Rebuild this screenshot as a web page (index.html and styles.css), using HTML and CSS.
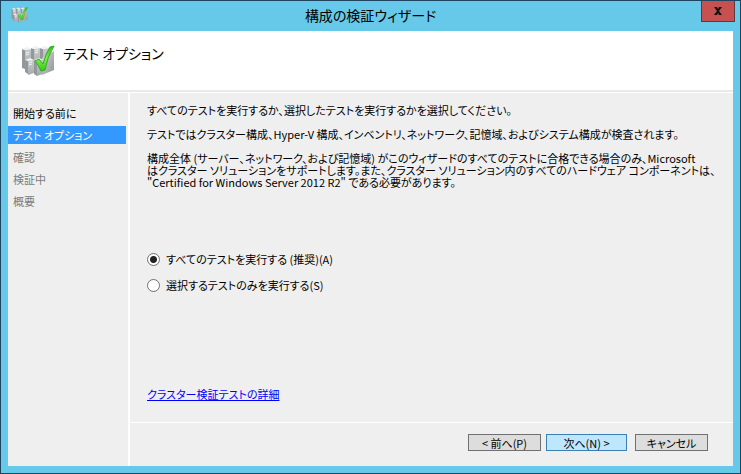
FILE: index.html
```html
<!DOCTYPE html>
<html lang="ja">
<head>
    <meta charset="UTF-8">
    <meta name="viewport" content="width=device-width, initial-scale=1.0">
    <title>構成の検証ウィザード</title>
    <link rel="stylesheet" href="styles.css">
</head>
<body>
    <!-- Shared cluster icon -->
    <svg class="symbols" aria-hidden="true">
        <defs>
            <linearGradient id="steel" x1="0" y1="0" x2="0" y2="1">
                <stop offset="0" stop-color="#c9cccf"/>
                <stop offset="1" stop-color="#a3a7aa"/>
            </linearGradient>
            <linearGradient id="shade" x1="0" y1="0" x2="1" y2="1">
                <stop offset="0" stop-color="#d8dadc"/>
                <stop offset="1" stop-color="#8e9295"/>
            </linearGradient>
            <linearGradient id="leaf" x1="0" y1="0" x2="0" y2="1">
                <stop offset="0" stop-color="#36b81f"/>
                <stop offset="0.5" stop-color="#7df04a"/>
                <stop offset="1" stop-color="#35c51a"/>
            </linearGradient>
        </defs>
        <symbol id="cluster" viewBox="0 0 34 32">
            <!-- Back row -->
            <path d="M1 4l3 1v19l-3-1z M10 3l3 1v12l-3-1z M19 3l3 1v12l-3-1z" fill="#94989b"/>
            <path d="M4 5l6-1v19l-6 1z M13 4l6-1v12l-6 2z M22 4l6-1v12l-6 2z" fill="url(#steel)"/>
            <path d="M1 4l5-2 4 2-6 1z M10 3l5-2 4 2-6 1z M19 3l5-2 4 2-6 1z" fill="#f0f1f2"/>
            <path d="M21 13l12-7v19l-12 5z" fill="url(#shade)"/>
            <!-- Front row -->
            <path d="M4 15l3 1v13l-3-2z M13 15l3 1v15l-3-2z" fill="#94989b"/>
            <path d="M7 16l6-1v13l-6 2z M16 16l6-1v14l-6 2z" fill="url(#steel)"/>
            <path d="M4 15l5-2 4 2-6 1z M13 15l5-2 4 2-6 1z" fill="#f0f1f2"/>
            <path d="M5 8l3-1M5 10l3-1M14 6l3-1M14 8l3-1M8 18l3-1M8 20l3-1M17 18l3-1M17 20l3-1" stroke="#fff" stroke-width=".8"/>
            <path d="M14 16l4-2 4 5q3-11 7-17l4-1q-7 11-9 24l-4 1q-2-5-6-10z" fill="url(#leaf)" stroke="#2fae1d" stroke-width="1"/>
        </symbol>
    </svg>

    <div class="window">
        <div class="titlebar">
            <svg class="titlebar-icon" aria-hidden="true"><use href="#cluster"/></svg>
            <span class="titlebar-text">構成の検証ウィザード</span>
            <button type="button" class="close" aria-label="閉じる">
                <svg viewBox="0 0 8 8" aria-hidden="true"><path d="M0 0h3l1 2 1-2h3L5 4l3 4H5L4 6 3 8H0l3-4z" fill="#161010"/></svg>
            </button>
        </div>

        <div class="dialog">
            <header class="header">
                <svg class="header-icon" aria-hidden="true"><use href="#cluster"/></svg>
                <h1>テスト オプション</h1>
            </header>

            <div class="body">
                <nav class="steps">
                    <ul>
                        <li>開始する前に</li>
                        <li class="active">テスト オプション</li>
                        <li class="pending">確認</li>
                        <li class="pending">検証中</li>
                        <li class="pending">概要</li>
                    </ul>
                </nav>

                <div class="main">
                    <div class="content">
                        <p>すべてのテストを実行するか、選択したテストを実行するかを選択してください。</p>
                        <p>テストではクラスター構成、Hyper-V 構成、インベントリ、ネットワーク、記憶域、およびシステム構成が検査されます。</p>
                        <p>構成全体 (サーバー、ネットワーク、および記憶域) がこのウィザードのすべてのテストに合格できる場合のみ、Microsoft<br>はクラスター ソリューションをサポートします。また、クラスター ソリューション内のすべてのハードウェア コンポーネントは、<br>"Certified for Windows Server 2012 R2" である必要があります。</p>

                        <div class="options">
                            <label><input type="radio" name="tests" value="all" checked> すべてのテストを実行する (推奨)(A)</label>
                            <label><input type="radio" name="tests" value="selected"> 選択するテストのみを実行する(S)</label>
                        </div>

                        <a class="details" href="#details">クラスター検証テストの詳細</a>
                    </div>

                    <div class="actions">
                        <button type="button">&lt; 前へ(P)</button>
                        <button type="button" class="next">次へ(N) &gt;</button>
                        <button type="button" class="cancel">キャンセル</button>
                    </div>
                </div>
            </div>
        </div>
    </div>
</body>
</html>
```
FILE: styles.css
```css
/* Global Styles */
* {
    box-sizing: border-box;
    margin: 0;
    padding: 0;
}

body {
    font-family: "Noto Sans CJK JP", sans-serif;
    font-feature-settings: "palt";
    font-size: 11px;
    line-height: 12px;
    color: #000;
}

button, input {
    font: inherit;
    font-feature-settings: inherit;
}

.symbols {
    position: absolute;
    width: 0;
    height: 0;
}

/* Window Frame */
.window {
    display: flex;
    flex-direction: column;
    min-height: 100vh;
    padding: 0 7px 7px;
    background-color: #66c9e9;
    border: 1px solid #1f4460;
}

.titlebar {
    display: grid;
    grid-template-columns: 1fr auto 1fr;
    height: 30px;
}

.titlebar-icon {
    width: 17px;
    height: 16px;
    margin: 6px 0 0 3px;
}

.titlebar-text {
    font-size: 14px;
    line-height: 28px;
}

.close {
    justify-self: end;
    width: 34px;
    height: 21px;
    margin-right: -2px;
    background-color: #c75050;
    border: 1px solid #5c3a44;
    border-top: none;
}

.close svg {
    display: block;
    width: 8px;
    height: 8px;
    margin: 0 auto;
}

/* Dialog */
.dialog {
    display: flex;
    flex: 1;
    flex-direction: column;
    background-color: #efefef;
}

.header {
    display: flex;
    gap: 8px;
    height: 61px;
    padding: 14px 13px;
    background-color: #fff;
    border-bottom: 2px solid #e9e9e9;
}

.header-icon {
    width: 34px;
    height: 32px;
}

h1 {
    font-size: 14px;
    font-weight: 400;
    line-height: 16px;
}

.body {
    display: flex;
    flex: 1;
    border-top: 1px solid #fff;
}

/* Steps */
.steps {
    flex: none;
    width: 122px;
    padding: 9px 2px 0 0;
    border-right: 2px solid #fff;
}

.steps ul {
    list-style: none;
}

.steps li {
    height: 22px;
    padding-left: 5px;
    line-height: 22px;
}

.steps .active {
    height: 18px;
    margin: 2px 0;
    color: #fff;
    line-height: 18px;
    background-color: #3399ff;
}

.steps .pending {
    color: #7c7c7c;
}

/* Content */
.main {
    display: flex;
    flex: 1;
    flex-direction: column;
    min-width: 0;
}

.content {
    display: flex;
    flex: 1;
    flex-direction: column;
    align-items: flex-start;
    padding: 11px 17px 22px;
}

.content p {
    margin-bottom: 12px;
    white-space: nowrap;
}

.options {
    display: flex;
    flex-direction: column;
    gap: 10px;
    margin-top: 51px;
}

.options label {
    display: flex;
    align-items: center;
    gap: 6px;
    height: 16px;
}

.options input {
    appearance: none;
    width: 13px;
    height: 13px;
    background-color: #fff;
    border: 1px solid #707070;
    border-radius: 50%;
}

.options input:checked {
    background-image: radial-gradient(circle, #222 3px, transparent 4px);
}

.details {
    margin-top: auto;
    color: #0000ff;
}

/* Buttons */
.actions {
    display: flex;
    justify-content: flex-end;
    height: 44px;
    padding: 11px 25px 0;
    border-top: 1px solid #fff;
}

.actions button {
    width: 73px;
    height: 17px;
    background-color: #dddddd;
    border: 1px solid #707070;
}

.actions .next {
    width: 81px;
    margin: 0 8px 0 5px;
    background-color: #bee6fd;
    border-color: #3c7fb1;
}
```
